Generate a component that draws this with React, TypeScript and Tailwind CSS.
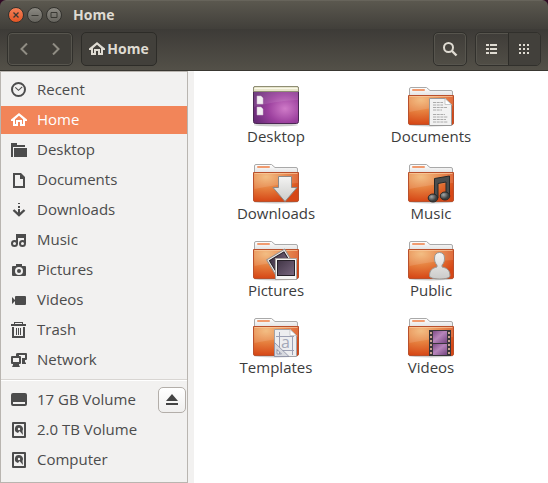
import type { ReactNode } from "react";

function Glyph({ children }: { children: ReactNode }) {
  return (
    <svg viewBox="0 0 16 16" className="size-4 shrink-0" fill="currentColor" aria-hidden="true">
      {children}
    </svg>
  );
}

const HomeGlyph = () => (
  <Glyph>
    <path d="M8 1 16 7.500V9h-2v5H9v-4H7v4H2V9H0V7.500zM8 3.800 4 7.200V12h1V8h6v4h1V7.200z" fillRule="evenodd" />
  </Glyph>
);

const RecentGlyph = () => (
  <Glyph>
    <circle cx="7.500" cy="7.500" r="6.500" fill="none" stroke="currentColor" strokeWidth="2" />
    <path d="m4.300 5.300 3.200 3 3.700-3.500" fill="none" stroke="currentColor" strokeWidth="1.100" />
  </Glyph>
);

const FolderGlyph = () => (
  <Glyph>
    <path d="M0 1h6v2h8v2H2v10H0z" />
    <path d="M3 6h13v9H3z" />
  </Glyph>
);

const DocumentGlyph = () => (
  <Glyph>
    <path d="M2 1h8l4 4v11H2zm2 2v11h8V7H9V3z" fillRule="evenodd" />
  </Glyph>
);

const DownloadGlyph = () => (
  <Glyph>
    <path d="M7 1h2v1H7zM7 4h2v2H7zM7 7h2v5H7z" />
    <path d="M2.500 8 8 13.200 13.500 8" fill="none" stroke="currentColor" strokeWidth="2.400" />
  </Glyph>
);

const MusicGlyph = () => (
  <Glyph>
    <path d="M5 2h10v9h-2V6H7v6H5z" />
    <circle cx="3.500" cy="11.500" r="2.500" fill="none" stroke="currentColor" strokeWidth="2" />
    <circle cx="11.500" cy="11.500" r="2.500" fill="none" stroke="currentColor" strokeWidth="2" />
  </Glyph>
);

const CameraGlyph = () => (
  <Glyph>
    <path d="M5 2h6v2h3q1 0 1 1v8q0 1-1 1H2q-1 0-1-1V5q0-1 1-1h3zM8 5a4 4 0 1 0 0 8 4 4 0 0 0 0-8z" fillRule="evenodd" />
    <circle cx="8" cy="9" r="2" />
  </Glyph>
);

const VideoGlyph = () => (
  <Glyph>
    <path d="m1 5 3 3V5q0-1 1-1h9q1 0 1 1v7q0 1-1 1H5q-1 0-1-1V9l-3 3z" />
  </Glyph>
);

const TrashGlyph = () => (
  <Glyph>
    <path d="M3 0h9v2h3v2H0V2h3zM4 1v1h7V1zM1 5h2v9h9V5h2v11H1zM5 6h1v7H5zM7 6h1v7H7zM9 6h1v7H9z" fillRule="evenodd" />
  </Glyph>
);

const NetworkGlyph = () => (
  <Glyph>
    <path d="M7 1h8q1 0 1 1v5q0 1-1 1h-1v2l1 1v1h-4V6h3V3H8v1H5V2q0-1 2-1z" />
    <path d="M1 4h8q1 0 1 1v6q0 1-1 1H8v1l1 2H1l1-2v-1H1q-1 0-1-1V5q0-1 1-1zm1 2v4h6V6z" fillRule="evenodd" />
  </Glyph>
);

const DriveGlyph = () => (
  <Glyph>
    <path d="M2 1h12q2 0 2 2v9q0 2-2 2H2q-2 0-2-2V3q0-2 2-2zm0 9v2h12v-2z" fillRule="evenodd" />
  </Glyph>
);

const DiskGlyph = () => (
  <Glyph>
    <path d="M2 0h12q1 0 1 1v14q0 1-1 1H2q-1 0-1-1V1q0-1 1-1zm1 2v12h10V2z" fillRule="evenodd" />
    <path d="M8 3a4 4 0 0 0-1 7.900L8.500 9 12 13l-.5-4A4 4 0 0 0 8 3zm0 2.800A1.200 1.200 0 1 1 8 8.200 1.200 1.200 0 0 1 8 5.800z" fillRule="evenodd" />
  </Glyph>
);

const places = [
  { name: "Recent", icon: <RecentGlyph /> },
  { name: "Home", icon: <HomeGlyph />, active: true },
  { name: "Desktop", icon: <FolderGlyph /> },
  { name: "Documents", icon: <DocumentGlyph /> },
  { name: "Downloads", icon: <DownloadGlyph /> },
  { name: "Music", icon: <MusicGlyph /> },
  { name: "Pictures", icon: <CameraGlyph /> },
  { name: "Videos", icon: <VideoGlyph /> },
  { name: "Trash", icon: <TrashGlyph /> },
  { name: "Network", icon: <NetworkGlyph /> },
];

const devices = [
  { name: "17 GB Volume", icon: <DriveGlyph />, ejectable: true },
  { name: "2.0 TB Volume", icon: <DiskGlyph /> },
  { name: "Computer", icon: <DiskGlyph /> },
];

function Place({ name, icon, active, ejectable }: { name: string; icon: ReactNode; active?: boolean; ejectable?: boolean }) {
  return (
    <li className={`flex h-7 items-center ${active ? "bg-[#f28559] text-white" : "text-[#4c4c4c]"}`}>
      <a href={"#" + name} aria-current={active ? "page" : undefined} className="flex min-w-0 flex-1 items-center gap-[10px] pl-[10px]">
        {icon}
        <span className="pb-[2px]">{name}</span>
      </a>
      {ejectable && (
        <button type="button" aria-label={"Eject " + name} className="mr-px flex h-[26px] w-7 items-center justify-center rounded-[5px] border border-[#b3aea9] bg-linear-to-b from-white to-[#f0efee] text-[#444]">
          <svg viewBox="0 0 12 12" className="size-3" fill="currentColor" aria-hidden="true">
            <path d="m6 0 6 7H0zM0 9h12v2H0z" />
          </svg>
        </button>
      )}
    </li>
  );
}

function Desktop() {
  return (
    <>
      <ellipse cx="24" cy="42" rx="22" ry="1.500" fill="#000" opacity=".2" />
      <rect x="1.500" y="3.500" width="45" height="37" rx="2" fill="url(#purple)" stroke="#4b2853" />
      <path d="M2 9h44v8Q22 18 2 24z" fill="#fff" opacity=".1" />
      <path d="M1.500 8.500V5q0-1.500 1.500-1.500h42q1.500 0 1.500 1.500v3.500z" fill="#e7e5cb" stroke="#8f8e73" />
      <path d="M2.500 5.500h43" stroke="#faf9e9" />
      <path d="M5 13h4l2 2v6H5zM5 24h4l2 2v6H5z" fill="#f2edf2" stroke="#cdb8cf" strokeWidth=".5" />
    </>
  );
}

function Folder({ children }: { children?: ReactNode }) {
  return (
    <>
      <ellipse cx="24" cy="42" rx="22" ry="1.500" fill="#000" opacity=".2" />
      <path d="M2.500 14V6q0-1.500 1.500-1.500h15.500L23 7.500h21q1.500 0 1.500 1.500V14z" fill="url(#tab)" stroke="#a9a9a9" />
      <rect x="5" y="6" width="13" height="2" rx="1" fill="#f19b6f" />
      <path d="M1.500 12.500h45V40q0 1.500-1.500 1.500H3q-1.500 0-1.500-1.500z" fill="url(#orange)" stroke="#b9502c" />
      <path d="M2.500 13.500h43" stroke="#fbc693" opacity=".7" />
      <path d="M2 13h44v10Q27 24 2.500 29z" fill="#fff" opacity=".12" />
      {children}
    </>
  );
}

const DocumentsArt = () => (
  <Folder>
    <path d="M22.500 15.500H38l6.500 6v21h-22z" fill="#f2f2f2" stroke="#999" />
    <path d="M38 15.500v6h6.500z" fill="#fff" stroke="#b5b5b5" strokeWidth=".7" />
    <path d="M26 19.500h10M26 22h10M26 24.500h14M26 27h9M26 31.500h12M26 34h15M26 36.500h13M26 39h15" stroke="#a3a3a3" strokeWidth=".9" strokeDasharray="3 .7" />
  </Folder>
);

const DownloadsArt = () => (
  <Folder>
    <path d="M26.500 16.500h13v11H45L33 41.500 21 27.500h5.500z" fill="url(#silver)" stroke="#8c8987" strokeLinejoin="round" />
  </Folder>
);

const MusicArt = () => (
  <Folder>
    <path d="M27.500 38V18.500L42.500 16v20h-3.500V22l-8 1.500V38z" fill="#4b4d4d" stroke="#272929" />
    <ellipse cx="26" cy="38" rx="4.800" ry="4" fill="url(#ball)" stroke="#282a2a" />
    <ellipse cx="38" cy="36" rx="4.800" ry="4" fill="url(#ball)" stroke="#282a2a" />
  </Folder>
);

const PicturesArt = () => (
  <Folder>
    <g transform="rotate(-31 27 26)">
      <rect x="18" y="17" width="21" height="18" fill="#f2f0ee" stroke="#96918f" />
      <rect x="20" y="19" width="17" height="14" fill="url(#photo)" stroke="#272129" />
    </g>
    <rect x="23.500" y="21.500" width="21" height="21" fill="#f6f5f4" stroke="#aaa5a2" />
    <rect x="25.500" y="23.500" width="17" height="15" fill="url(#photo)" stroke="#272129" />
  </Folder>
);

const PublicArt = () => (
  <Folder>
    <path d="M22.500 39c0-6 3-8 7.500-9v-2c-2-2-2.500-4-2.500-7 0-3.500 2-5.500 5-5.500s5 2 5 5.500c0 3-.5 5-2.500 7v2c5 1 8 3 8 9 0 4-20.500 4-20.500 0z" fill="url(#silver)" stroke="#999793" />
  </Folder>
);

const TemplatesArt = () => (
  <Folder>
    <path d="M22.500 15.500H38l6.500 6v21h-22z" fill="#edeef0" stroke="#a2a3a7" />
    <path d="M38 15.500v6h6.500z" fill="#fff" stroke="#bbb" strokeWidth=".7" />
    <path d="M24 22.500h18M24 36.500h18M27.500 18v23M40.500 22v19" stroke="#9ca0b4" />
    <text x="29" y="34" fontSize="16" fill="#a4a8b8" className="font-['Open_Sans',sans-serif]">a</text>
    <path d="M22.500 28.500v14H37zM25 35.500v4.500h4.500z" fill="#d7d9df" fillRule="evenodd" stroke="#898da3" strokeWidth=".8" />
  </Folder>
);

const VideosArt = () => (
  <Folder>
    <rect x="22" y="16" width="22" height="26" fill="#383539" />
    <rect x="26" y="17" width="14" height="12" fill="url(#film)" />
    <rect x="26" y="30" width="14" height="11" fill="url(#film)" />
    <path d="M24 18v23M42 18v23" stroke="#c9a492" strokeWidth="2" strokeDasharray="2 2" />
  </Folder>
);

const files = [
  { name: "Desktop", art: <Desktop /> },
  { name: "Documents", art: <DocumentsArt /> },
  { name: "Downloads", art: <DownloadsArt /> },
  { name: "Music", art: <MusicArt /> },
  { name: "Pictures", art: <PicturesArt /> },
  { name: "Public", art: <PublicArt /> },
  { name: "Templates", art: <TemplatesArt /> },
  { name: "Videos", art: <VideosArt /> },
];

function Gradients() {
  return (
    <svg width="0" height="0" className="absolute" aria-hidden="true">
      <defs>
        <radialGradient id="purple" cx=".7" cy=".6" r=".75">
          <stop offset="0" stopColor="#cf7bc8" />
          <stop offset=".5" stopColor="#9d419f" />
          <stop offset="1" stopColor="#642a74" />
        </radialGradient>
        <radialGradient id="orange" cx=".28" cy=".15" r=".85">
          <stop offset="0" stopColor="#f1b573" />
          <stop offset=".5" stopColor="#e57d3c" />
          <stop offset="1" stopColor="#d64716" />
        </radialGradient>
        <linearGradient id="tab" x2="0" y2="1">
          <stop stopColor="#fff" />
          <stop offset="1" stopColor="#dedede" />
        </linearGradient>
        <linearGradient id="silver" x2="0" y2="1">
          <stop stopColor="#f4f4f3" />
          <stop offset="1" stopColor="#cbcbc9" />
        </linearGradient>
        <radialGradient id="ball" cx=".35" cy=".35">
          <stop stopColor="#a4a7a7" />
          <stop offset="1" stopColor="#3c3f3f" />
        </radialGradient>
        <linearGradient id="photo" x2="1" y2="1">
          <stop stopColor="#413546" />
          <stop offset="1" stopColor="#7a6880" />
        </linearGradient>
        <linearGradient id="film" x2="1" y2="1">
          <stop stopColor="#7f4d89" />
          <stop offset=".45" stopColor="#b685ba" />
          <stop offset="1" stopColor="#744580" />
        </linearGradient>
      </defs>
    </svg>
  );
}

const windowButton = "flex size-4 items-center justify-center rounded-full border border-[#33322e] text-[#393833]";
const toolButton = "rounded-[5px] border border-[#31302c] shadow-[inset_0_0_0_1px_#57554e]";

export default function App() {
  return (
    <div className="flex min-h-screen flex-col bg-[#300a24] font-['Open_Sans','Noto_Sans',sans-serif] text-[15px] leading-[18px] text-[#3c3c3c]">
      <Gradients />
      <header className="overflow-hidden rounded-t-md">
        <div className="flex h-[29px] items-center border-t border-[#67645b] bg-linear-to-b from-[#5b584f] to-[#413f3a] pl-2">
          <div className="flex gap-[3px]">
            <button type="button" aria-label="Close" className={windowButton + " bg-linear-to-b from-[#f58057] to-[#e25523]"}>
              <svg viewBox="0 0 8 8" className="size-2" stroke="currentColor" strokeWidth="1.300"><path d="m1.500 1.500 5 5m0-5-5 5" /></svg>
            </button>
            <button type="button" aria-label="Minimize" className={windowButton + " bg-linear-to-b from-[#8b8982] to-[#66645e]"}>
              <svg viewBox="0 0 8 8" className="size-2" stroke="currentColor"><path d="M.5 4.500h7" /></svg>
            </button>
            <button type="button" aria-label="Maximize" className={windowButton + " bg-linear-to-b from-[#8b8982] to-[#66645e]"}>
              <svg viewBox="0 0 8 8" className="size-2" fill="none" stroke="currentColor"><path d="M1 1.500h6v5H1z" /></svg>
            </button>
          </div>
          <h1 className="ml-[11px] text-sm leading-[18px] font-bold text-[#dfdbd2]">Home</h1>
        </div>
        <div className="flex items-start gap-2 border-b border-[#393731] bg-linear-to-b from-[#3d3b37] to-[#535048] px-[7px] pt-[3px] pb-1 text-[#dfdbd2]">
          <div className={"flex h-[34px] w-[66px] bg-[#403e39] text-[#908d84] " + toolButton}>
            <button type="button" aria-label="Back" className="flex flex-1 items-center justify-center">
              <svg viewBox="0 0 8 12" className="h-3 w-2" fill="none" stroke="currentColor" strokeWidth="2"><path d="M7 .5 1.500 6 7 11.500" /></svg>
            </button>
            <button type="button" aria-label="Forward" className="flex flex-1 items-center justify-center">
              <svg viewBox="0 0 8 12" className="h-3 w-2" fill="none" stroke="currentColor" strokeWidth="2"><path d="M1 .5 6.500 6 1 11.500" /></svg>
            </button>
          </div>
          <button type="button" className="flex h-[34px] w-[76px] items-center justify-center gap-[2px] rounded-[5px] border border-[#2d2c28] bg-[#42403b] text-sm leading-[18px] font-bold">
            <HomeGlyph />
            Home
          </button>
          <button type="button" aria-label="Search" className={"ml-auto flex h-[34px] w-[34px] items-center justify-center " + toolButton}>
            <svg viewBox="0 0 16 16" className="size-4" fill="none" stroke="currentColor"><circle cx="6.500" cy="6.500" r="4.500" strokeWidth="2" /><path d="m10 10 4.500 4.500" strokeWidth="2.400" /></svg>
          </button>
          <div className={"flex h-[34px] w-[66px] overflow-hidden " + toolButton}>
            <button type="button" aria-label="List view" className="flex flex-1 items-center justify-center">
              <svg viewBox="0 0 11 10" className="h-[10px] w-[11px]" fill="currentColor"><path d="M0 0h3v2H0zM4 0h7v2H4zM0 4h3v2H0zM4 4h7v2H4zM0 8h3v2H0zM4 8h7v2H4z" /></svg>
            </button>
            <button type="button" aria-label="Icon view" aria-pressed="true" className="flex flex-1 items-center justify-center border-l border-[#2d2c28] bg-[#42403b]">
              <svg viewBox="0 0 10 10" className="size-[10px]" fill="currentColor"><path d="M0 0h2v2H0zM4 0h2v2H4zM8 0h2v2H8zM0 4h2v2H0zM4 4h2v2H4zM8 4h2v2H8zM0 8h2v2H0zM4 8h2v2H4zM8 8h2v2H8z" /></svg>
            </button>
          </div>
        </div>
      </header>
      <div className="flex flex-1 bg-[#f2f1f0]">
        <nav aria-label="Places" className="mr-[6px] w-[188px] shrink-0 border border-[#b9b5b0]">
          <ul className="flex flex-col gap-[2px] pt-1 pb-[5px]">
            {places.map((p) => <Place key={p.name} {...p} />)}
          </ul>
          <ul className="flex flex-col gap-[2px] border-t border-[#d8d5d2] pt-[6px] shadow-[inset_0_1px_0_#fff]">
            {devices.map((d) => <Place key={d.name} {...d} />)}
          </ul>
        </nav>
        <main className="min-w-0 flex-1 bg-white pt-3 pl-[5px]">
          <ul className="grid grid-cols-[repeat(auto-fill,154px)] gap-x-px gap-y-[15px]">
            {files.map((f) => (
              <li key={f.name} className="flex justify-center">
                <button type="button" className="flex flex-col items-center">
                  <svg viewBox="0 0 48 44" className="h-11 w-12" aria-hidden="true">{f.art}</svg>
                  <span>{f.name}</span>
                </button>
              </li>
            ))}
          </ul>
        </main>
      </div>
    </div>
  );
}
